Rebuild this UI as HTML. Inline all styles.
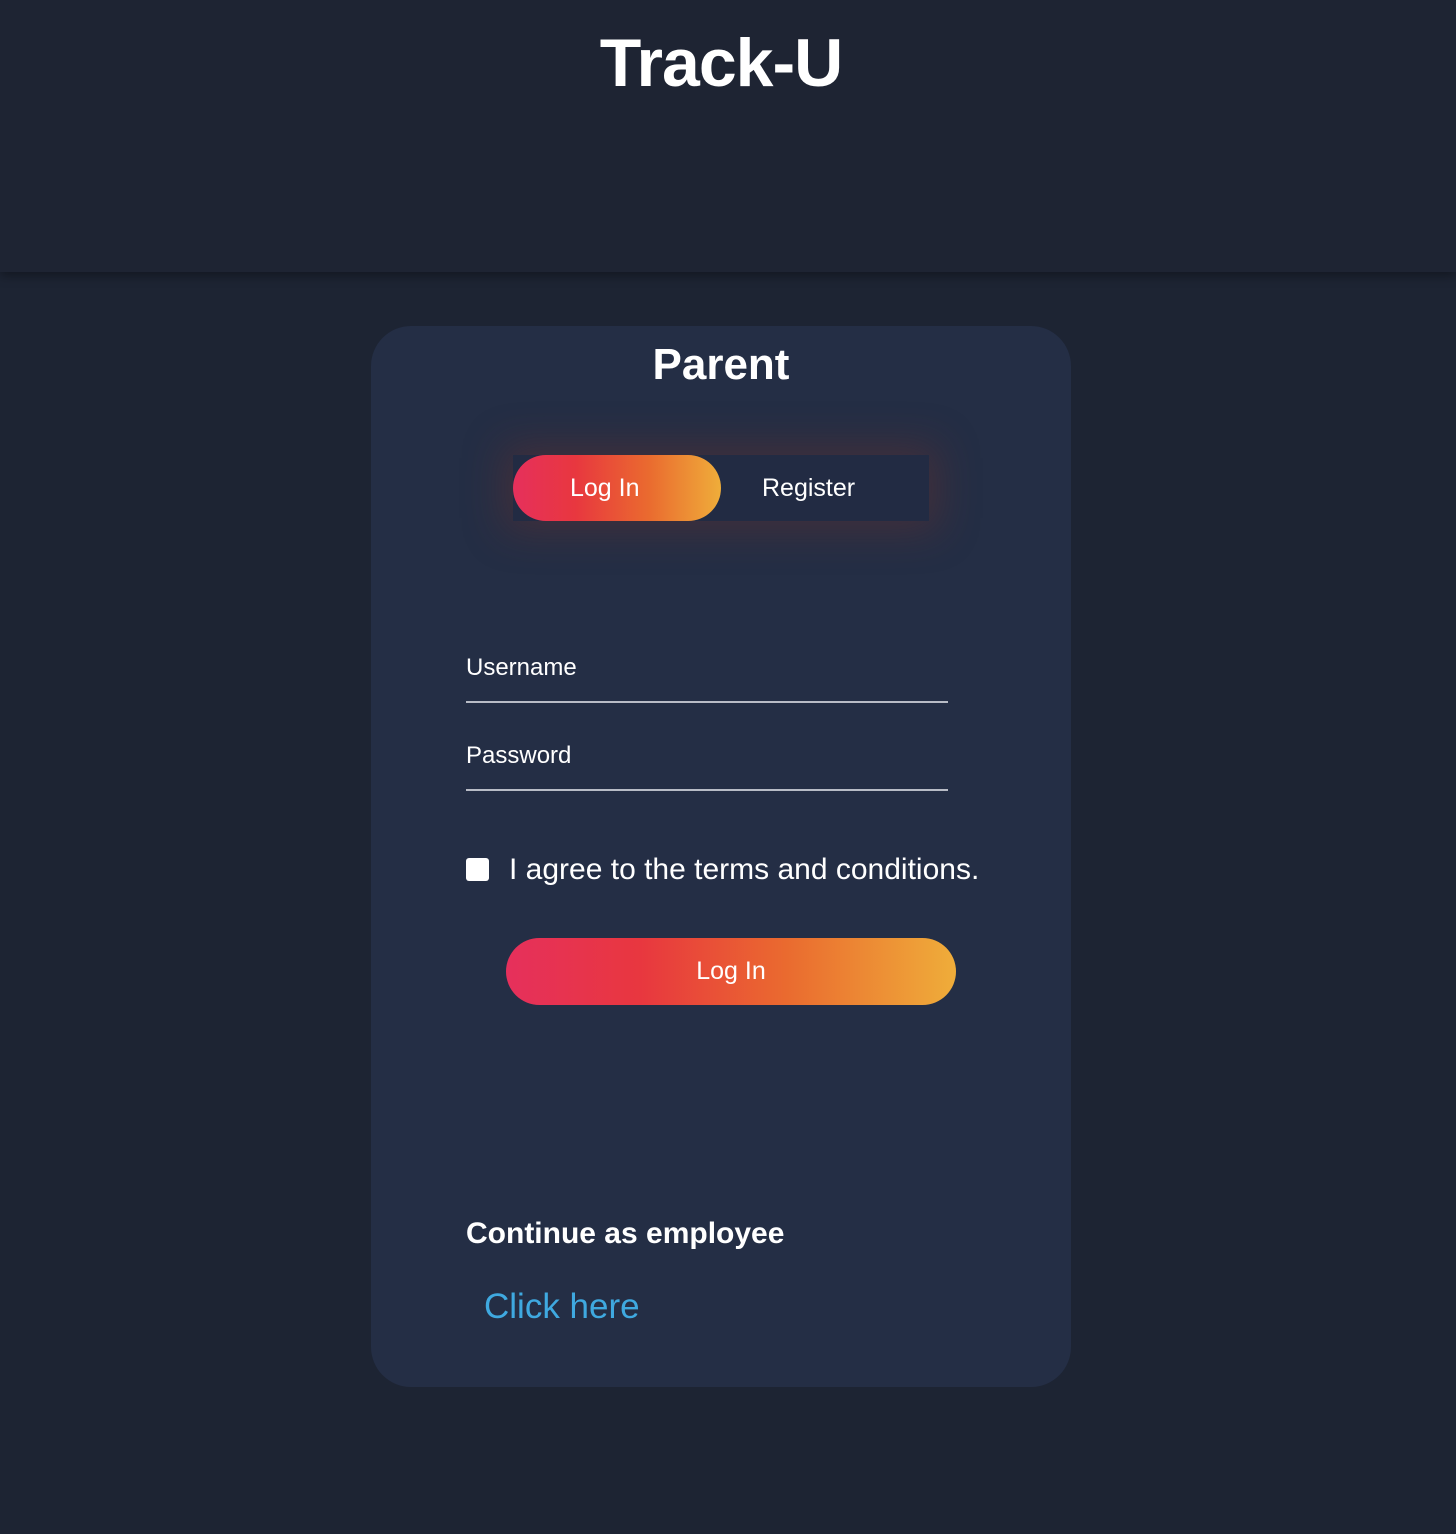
<!DOCTYPE html>
<html><head><meta charset="utf-8"><style>
*{margin:0;padding:0;box-sizing:border-box}
body{width:1456px;height:1534px;background:#1d2433;font-family:"Liberation Sans",Arial,sans-serif;color:#fff;position:relative;overflow:hidden}
.hdr{position:absolute;left:0;top:0;width:1456px;height:272px;background:#1e2433;box-shadow:0 4px 10px rgba(0,0,0,.35)}
.hdr h1{position:absolute;top:24px;left:-7px;width:100%;text-align:center;font-size:68px;font-weight:bold;letter-spacing:-1px}
.card{position:absolute;left:371px;top:326px;width:700px;height:1061px;background:#242e45;border-radius:40px}
.t{position:absolute;width:100%;text-align:center;top:14px;font-size:44px;font-weight:bold}
.tog{position:absolute;left:142px;top:129px;width:416px;height:66px;background:#222b43;box-shadow:0 0 40px 10px rgba(120,50,40,.35)}
.pill{position:absolute;left:0;top:0;width:208px;height:66px;border-radius:33px;background:linear-gradient(90deg,#e6305c,#e8373f 30%,#ea6a2f 65%,#efad3a);font-size:25px;line-height:66px}
.pill span{position:absolute;left:57px}
.reg{position:absolute;left:249px;top:0;line-height:66px;font-size:25px}
.lab{position:absolute;left:95px;font-size:24px}
.line{position:absolute;left:95px;width:482px;height:2px;background:#b8bcc6}
.cb{position:absolute;left:95px;top:532px;width:23px;height:23px;background:#fff;border-radius:3px}
.agree{position:absolute;left:138px;top:527px;font-size:30px}
.btn{position:absolute;left:135px;top:612px;width:450px;height:67px;border-radius:34px;background:linear-gradient(90deg,#e6305c,#e8373f 30%,#ea6a2f 62%,#efad3a);text-align:center;line-height:67px;font-size:25px}
.cont{position:absolute;left:95px;top:891px;font-size:30px;font-weight:bold}
.click{position:absolute;left:113px;top:961px;font-size:35px;color:#3fa9e0}
</style></head><body>
<div class="hdr"><h1>Track-U</h1></div>
<div class="card">
<div class="t">Parent</div>
<div class="tog"><div class="pill"><span>Log In</span></div><div class="reg">Register</div></div>
<div class="lab" style="top:328px">Username</div>
<div class="line" style="top:375px"></div>
<div class="lab" style="top:416px">Password</div>
<div class="line" style="top:463px"></div>
<div class="cb"></div>
<div class="agree">I agree to the terms and conditions.</div>
<div class="btn">Log In</div>
<div class="cont">Continue as employee</div>
<div class="click">Click here</div>
</div>
</body></html>
